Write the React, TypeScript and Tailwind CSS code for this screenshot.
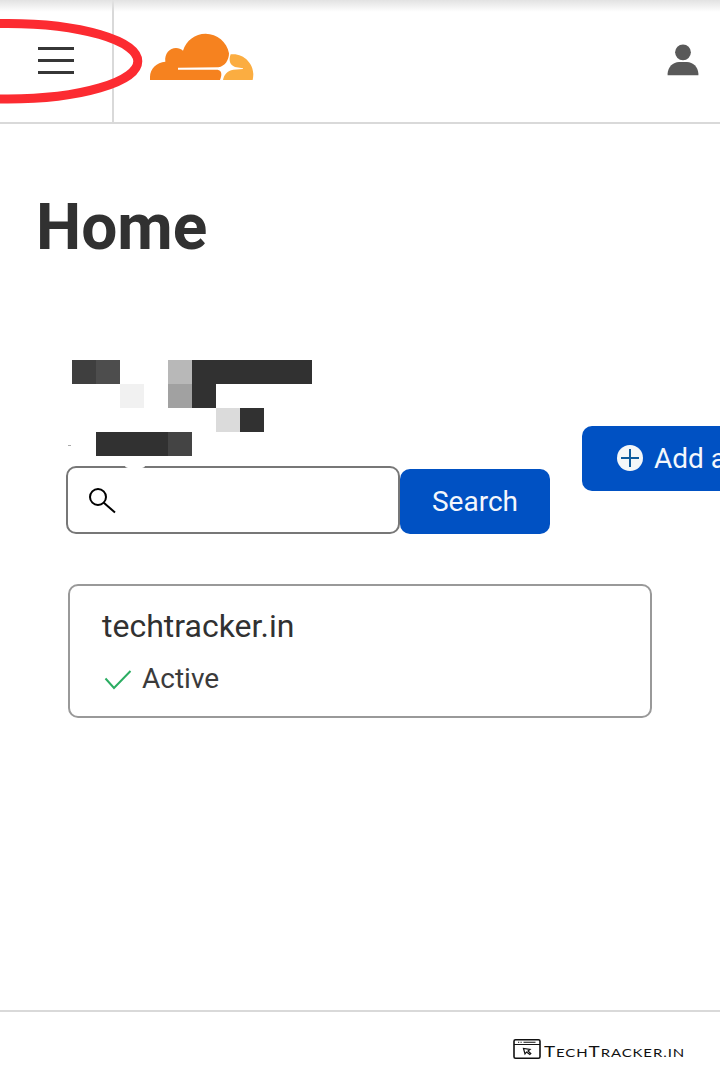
const MOSAIC: string[][] = [
  ["bg-[#3f3f3f]", "bg-[#4d4d4d]", "", "", "bg-[#b8b8b8]", "bg-[#313131]", "bg-[#313131]", "bg-[#313131]", "bg-[#313131]", "bg-[#313131]"],
  ["", "", "bg-[#f1f1f1]", "", "bg-[#a1a1a1]", "bg-[#313131]", "", "", "", ""],
  ["", "", "", "", "", "", "bg-[#dbdbdb]", "bg-[#313131]", "", ""],
  ["", "bg-[#313131]", "bg-[#313131]", "bg-[#313131]", "bg-[#444444]", "", "", "", "", ""],
];

function CloudLogo() {
  return (
    <svg viewBox="444 96 321 150" className="h-[50px] w-[107px]" aria-label="Cloudflare">
      <path
        fill="#f6821f"
        d="M450 240V231C450 206 470 187 496 185C493 161 509 144 528 144C536 144 543 147 549 152C559 121 585 101 617 101C651 101 681 126 687 160C687 180 675 199 655 202L534 203V209L653 209C662 211 664 216 664 223C664 230 662 235 660 240Z"
      />
      <path
        fill="#fbad41"
        d="M692 163C730 158 760 190 760 222C760 229 759 235 758 240H669C672 224 682 212 700 209L729 207V205L705 201C690 195 685 182 692 163Z"
      />
    </svg>
  );
}

function Header() {
  return (
    <header className="relative flex h-[124px] shrink-0 border-b-2 border-[#d9d9d9]">
      <div className="absolute inset-x-0 top-0 h-3 bg-linear-to-b from-[#e2e2e2] to-transparent" />
      <button className="flex w-[114px] items-center border-r-2 border-[#d9d9d9] pl-[38px]" aria-label="Menu">
        <span className="flex flex-col gap-[9px] pb-0.5">
          <span className="h-[3px] w-9 bg-[#363636]" />
          <span className="h-[3px] w-9 bg-[#363636]" />
          <span className="h-[3px] w-9 bg-[#363636]" />
        </span>
      </button>
      <div className="flex flex-1 items-start justify-between pr-[21px] pl-[34px]">
        <div className="pt-8">
          <CloudLogo />
        </div>
        <svg viewBox="0 0 32 32" className="mt-11 size-8" fill="#595959">
          <circle cx="16" cy="8.3" r="7.9" />
          <path d="M.6 31.3V29.500C1 23 6 18 12 18H20C26 18 31 23 31.400 29.500V31.300Z" />
        </svg>
      </div>
      <svg viewBox="0 0 150 110" className="absolute top-0 left-0 h-[110px] w-[150px]" fill="none">
        <ellipse cx="8" cy="61.200" rx="129.800" ry="37.800" stroke="#fc2b31" strokeWidth="9" />
      </svg>
    </header>
  );
}

export default function App() {
  return (
    <div className="flex h-[1083px] w-[720px] flex-col overflow-hidden bg-white font-['Roboto',sans-serif] text-[#313131]">
      <Header />
      <main className="flex-1 overflow-hidden">
        <h1 className="pt-16 pl-9 text-[64px] leading-[80px] font-bold">Home</h1>
        <div className="mt-[92px] flex w-[900px] items-start pl-[66px]">
          <section className="w-[484px]">
            <div className="relative ml-1.5 grid w-60 grid-cols-10">
              {MOSAIC.flat().map((tone, i) => (
                <span key={i} className={`h-6 ${tone}`} />
              ))}
              <span className="absolute top-[85px] -left-1 h-px w-[3px] bg-[#aaaaaa]" />
            </div>
            <div className="mt-2.5 flex items-start">
              <div className="relative flex h-[68px] w-[334px] rounded-[10px] border-2 border-[#777777] pt-5 pl-5">
                <span className="absolute -top-[5px] left-[57px] h-1.5 w-5 rounded-[50%] bg-white" />
                <svg viewBox="0 0 30 30" className="size-[30px]" fill="none" stroke="#000" strokeWidth="2">
                  <circle cx="10" cy="9" r="8" />
                  <path d="M15.800 14.800L27 24.500" />
                </svg>
              </div>
              <button className="mt-[3px] h-[65px] w-[150px] rounded-[10px] bg-[#0051c3] text-[28px] text-[#f4f7fc]">Search</button>
            </div>
          </section>
          <button className="mt-[66px] ml-8 flex h-[65px] w-[220px] items-center gap-[11px] rounded-[10px] bg-[#0051c3] pl-[35px] text-[28px] text-[#f4f7fc]">
            <svg viewBox="0 0 26 26" className="mb-0.5 size-[26px]">
              <circle cx="13" cy="13" r="13" fill="#f4f7f8" />
              <path d="M4 13H22M13 4V22" stroke="#0d5b9c" strokeWidth="2" />
            </svg>
            <span className="whitespace-nowrap">Add a</span>
          </button>
        </div>
        <article className="mt-[50px] ml-[68px] h-[134px] w-[584px] rounded-[10px] border-2 border-[#999999] pt-5 pl-8">
          <h2 className="text-[32px] leading-10">techtracker.in</h2>
          <div className="mt-[13px] flex items-center gap-2.5 text-[28px] leading-10 text-[#3b3b3b]">
            <svg viewBox="0 0 30 30" className="size-[30px]" fill="none" stroke="#2bad62" strokeWidth="2">
              <path d="M3.500 14.500L12 24L28.500 7" />
            </svg>
            <span>Active</span>
          </div>
        </article>
      </main>
      <footer className="flex h-[73px] shrink-0 items-start border-t-2 border-[#d9d9d9] pt-[26px] pl-[513px]">
        <svg viewBox="0 0 28 22" className="h-[22px] w-7 shrink-0" fill="none" stroke="#111">
          <rect x="1" y="1.800" width="26" height="18.400" rx="1.500" strokeWidth="1.600" />
          <path d="M1 6.500H27" />
          <path d="M5 4.300H6.200M7.500 4.300H8.700M10.500 4.300H22.500" strokeWidth="1.100" />
          <path d="M10.500 10.500L12 16L13.500 14L16.800 16.500L17.800 15.500L15 13L17 11.500Z" strokeWidth="1.200" />
        </svg>
        <span className="ml-[3px] origin-left scale-x-[1.3] font-['Lato',sans-serif] text-[14.500px] leading-[27px] tracking-[0.7px] whitespace-nowrap text-[#111]">
          T<span className="text-[11.500px]">ECH</span>T<span className="text-[11.500px]">RACKER.IN</span>
        </span>
      </footer>
    </div>
  );
}
